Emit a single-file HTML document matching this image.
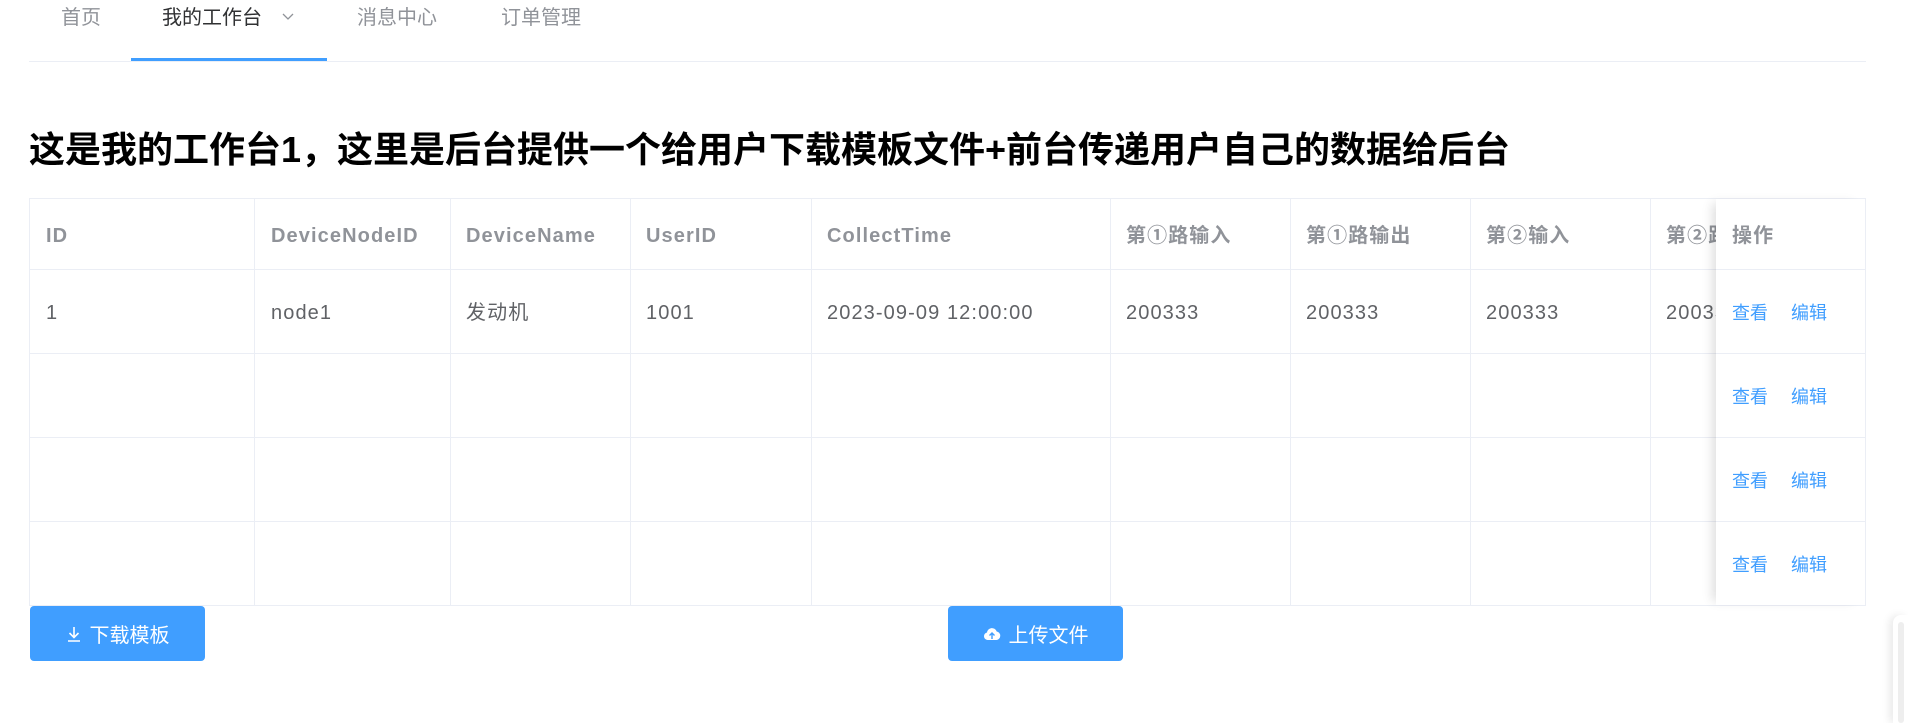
<!DOCTYPE html>
<html><head><meta charset="utf-8"><style>
*{margin:0;padding:0;box-sizing:border-box}
body{width:1908px;height:723px;background:#fff;position:relative;overflow:hidden;font-family:"Liberation Sans","Noto Sans CJK SC",sans-serif}
.a{position:absolute;white-space:nowrap}
.tab{top:4px;font-size:20px;color:#909399;line-height:28px}
.hl{position:absolute;background:#ebeef5;height:1px}
.vl{position:absolute;background:#ebeef5;width:1px}
.th{font-size:20px;font-weight:bold;color:#909399;line-height:24px;letter-spacing:1.1px}
.td{font-size:20px;color:#606266;line-height:24px;letter-spacing:1.1px}
.lk{font-size:18px;color:#409eff;line-height:24px}
.btn{position:absolute;background:#409eff;border-radius:4px;color:#fff;font-size:20px;display:flex;align-items:center;justify-content:center;gap:8px;height:55px;top:606px}
</style></head><body>
<div class="a tab" style="left:61px">首页</div>
<div class="a tab" style="left:162px;color:#303133">我的工作台</div>
<svg class="a" style="left:281px;top:12px" width="14" height="10" viewBox="0 0 14 10"><path d="M2 2l5 5 5-5" fill="none" stroke="#909399" stroke-width="1.3"/></svg>
<div class="a tab" style="left:357px">消息中心</div>
<div class="a tab" style="left:501px">订单管理</div>
<div class="hl" style="left:29px;width:1837px;top:61px"></div>
<div class="a" style="left:131px;top:58px;width:196px;height:3px;background:#409eff"></div>

<div class="a" style="left:29px;top:128px;font-size:36px;font-weight:bold;color:#000;line-height:44px">这是我的工作台1，这里是后台提供一个给用户下载模板文件+前台传递用户自己的数据给后台</div>

<div class="a" style="left:29px;top:198px;width:1837px;height:408px;border:1px solid #ebeef5"></div>
<div class="hl" style="left:29px;width:1837px;top:269px"></div>
<div class="hl" style="left:29px;width:1837px;top:353px"></div>
<div class="hl" style="left:29px;width:1837px;top:437px"></div>
<div class="hl" style="left:29px;width:1837px;top:521px"></div>
<div class="vl" style="left:254px;top:198px;height:408px"></div>
<div class="vl" style="left:450px;top:198px;height:408px"></div>
<div class="vl" style="left:630px;top:198px;height:408px"></div>
<div class="vl" style="left:811px;top:198px;height:408px"></div>
<div class="vl" style="left:1110px;top:198px;height:408px"></div>
<div class="vl" style="left:1290px;top:198px;height:408px"></div>
<div class="vl" style="left:1470px;top:198px;height:408px"></div>
<div class="vl" style="left:1650px;top:198px;height:408px"></div>

<div class="a th" style="left:46px;top:224px">ID</div>
<div class="a th" style="left:271px;top:224px">DeviceNodeID</div>
<div class="a th" style="left:466px;top:224px">DeviceName</div>
<div class="a th" style="left:646px;top:224px">UserID</div>
<div class="a th" style="left:827px;top:224px">CollectTime</div>
<div class="a th" style="left:1126px;top:224px">第①路输入</div>
<div class="a th" style="left:1306px;top:224px">第①路输出</div>
<div class="a th" style="left:1486px;top:224px">第②输入</div>
<div class="a th" style="left:1666px;top:224px">第②路输出</div>

<div class="a td" style="left:46px;top:301px">1</div>
<div class="a td" style="left:271px;top:301px">node1</div>
<div class="a td" style="left:466px;top:301px">发动机</div>
<div class="a td" style="left:646px;top:301px">1001</div>
<div class="a td" style="left:827px;top:301px">2023-09-09 12:00:00</div>
<div class="a td" style="left:1126px;top:301px">200333</div>
<div class="a td" style="left:1306px;top:301px">200333</div>
<div class="a td" style="left:1486px;top:301px">200333</div>
<div class="a td" style="left:1666px;top:301px">200333</div>

<div class="a" style="left:1716px;top:199px;width:149px;height:406px;background:#fff;box-shadow:-8px 0 10px -4px rgba(0,0,0,0.12)"></div>
<div class="hl" style="left:1716px;width:149px;top:269px"></div>
<div class="hl" style="left:1716px;width:149px;top:353px"></div>
<div class="hl" style="left:1716px;width:149px;top:437px"></div>
<div class="hl" style="left:1716px;width:149px;top:521px"></div>
<div class="a th" style="left:1732px;top:224px">操作</div>
<div class="a lk" style="left:1732px;top:301px">查看</div><div class="a lk" style="left:1791px;top:301px">编辑</div>
<div class="a lk" style="left:1732px;top:385px">查看</div><div class="a lk" style="left:1791px;top:385px">编辑</div>
<div class="a lk" style="left:1732px;top:469px">查看</div><div class="a lk" style="left:1791px;top:469px">编辑</div>
<div class="a lk" style="left:1732px;top:553px">查看</div><div class="a lk" style="left:1791px;top:553px">编辑</div>

<div class="btn" style="left:30px;width:175px">
<svg width="16" height="16" viewBox="0 0 16 16"><path d="M8 1v10M3.5 7L8 11.5 12.5 7M2 15h12" fill="none" stroke="#fff" stroke-width="1.6"/></svg><span>下载模板</span></div>
<div class="btn" style="left:948px;width:175px">
<svg width="18" height="16" viewBox="0 0 18 16"><path d="M4.5 14A3.8 3.8 0 0 1 4 6.5 5 5 0 0 1 13.7 5.5 4.3 4.3 0 0 1 13.5 14Z" fill="#fff"/><path d="M9 13V7M6.5 9.5L9 7l2.5 2.5" fill="none" stroke="#409eff" stroke-width="1.4"/></svg><span>上传文件</span></div>

<div class="a" style="left:1893px;top:615px;width:15px;height:108px;border-radius:8px 0 0 0;background:#fff;box-shadow:-4px 0 8px rgba(0,0,0,0.08)"></div>
<div class="a" style="left:1898px;top:622px;width:6px;height:101px;border-radius:3px;background:#eee"></div>
</body></html>
